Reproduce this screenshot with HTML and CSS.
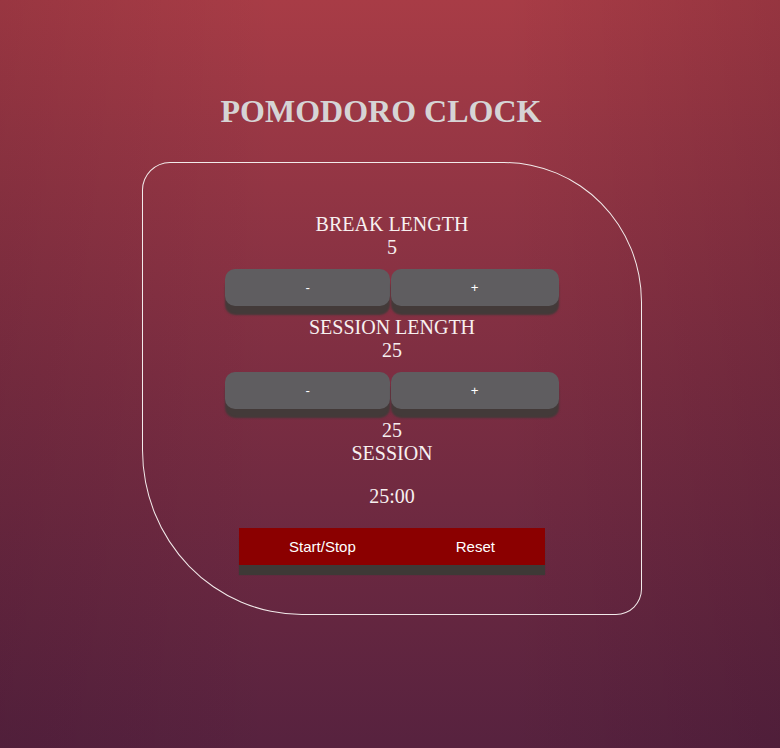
FILE: index.html
```html
<!DOCTYPE html>
<html>
<head>
<meta charset="utf-8">
<title>Pomodoro Clock</title>
<link rel="stylesheet" href="styles.css">
</head>
<body>
<div class="page">
  <h1 class="title">POMODORO CLOCK</h1>
  <div class="card">
    <div class="label">BREAK LENGTH</div>
    <div class="value">5</div>
    <div class="adjust">
      <button class="adj">-</button>
      <button class="adj">+</button>
    </div>
    <div class="label">SESSION LENGTH</div>
    <div class="value">25</div>
    <div class="adjust">
      <button class="adj">-</button>
      <button class="adj">+</button>
    </div>
    <div class="value">25</div>
    <div class="value">SESSION</div>
    <div class="time">25:00</div>
    <div class="controls">
      <button class="ctl">Start/Stop</button>
      <button class="ctl">Reset</button>
    </div>
  </div>
</div>
</body>
</html>
```
FILE: styles.css
```css
html, body {
  margin: 0;
  height: 100%;
}
body {
  background:
    linear-gradient(to right, rgba(20, 0, 20, 0.1) 0%, rgba(20, 0, 20, 0) 35%, rgba(20, 0, 20, 0) 65%, rgba(20, 0, 20, 0.12) 100%),
    linear-gradient(to bottom, #a83c46 0%, #7d2e42 50%, #57223f 100%);
  font-family: "Liberation Serif", "Times New Roman", serif;
  overflow: hidden;
}
.page {
  padding-top: 93px;
  height: 748px;
  box-sizing: border-box;
}
.title {
  margin: 0;
  padding-right: 18px;
  text-align: center;
  font-size: 32px;
  line-height: 37px;
  font-weight: bold;
  color: #d6d4d5;
}
.card {
  box-sizing: border-box;
  width: 500px;
  margin: 32px 0 0 142px;
  padding: 50px 0 49px;
  border: 1px solid #f2eaea;
  border-radius: 28px 138px 26px 160px / 28px 140px 26px 165px;
  display: flex;
  flex-direction: column;
  align-items: center;
  color: #f7f0f0;
}
.label, .value, .time {
  font-size: 20px;
  line-height: 23px;
  text-align: center;
}
.time {
  margin-top: 20px;
}
.adjust {
  display: flex;
  gap: 1px;
  margin: 10px 0;
}
.adj {
  height: 37px;
  padding: 0 80px;
  border: none;
  border-radius: 10px;
  background: #5f5d60;
  color: #ffffff;
  font-family: "Liberation Sans", Arial, sans-serif;
  font-size: 13.33px;
  box-shadow: 0 9px 2px #433a39;
}
.controls {
  display: flex;
  margin-top: 20px;
  box-shadow: 0 10px 1px #3e3936;
}
.ctl {
  height: 37px;
  padding: 0 50px;
  border: none;
  background: #8b0000;
  color: #ffffff;
  font-family: "Liberation Sans", Arial, sans-serif;
  font-size: 15px;
}
```
